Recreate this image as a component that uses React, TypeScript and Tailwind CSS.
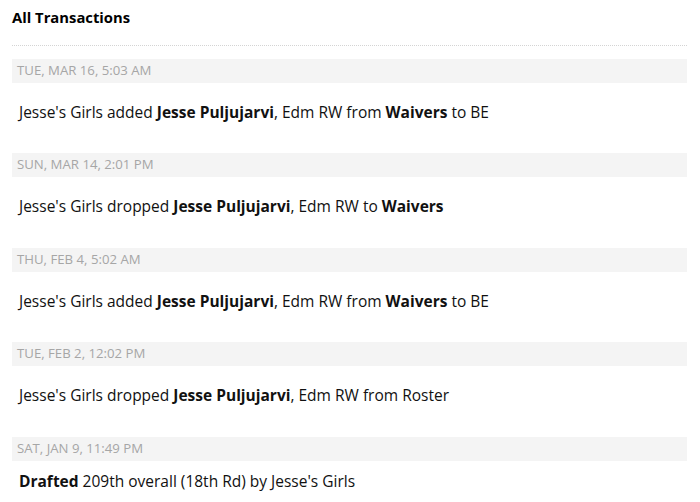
const rows = [
  {
    date: 'TUE, MAR 16, 5:03 AM',
    h: 'h-[70px]',
    body: (
      <>
        Jesse's Girls added <b>Jesse Puljujarvi</b>, Edm RW from <b>Waivers</b> to BE
      </>
    ),
  },
  {
    date: 'SUN, MAR 14, 2:01 PM',
    h: 'h-[71px]',
    body: (
      <>
        Jesse's Girls dropped <b>Jesse Puljujarvi</b>, Edm RW to <b>Waivers</b>
      </>
    ),
  },
  {
    date: 'THU, FEB 4, 5:02 AM',
    h: 'h-[70px]',
    body: (
      <>
        Jesse's Girls added <b>Jesse Puljujarvi</b>, Edm RW from <b>Waivers</b> to BE
      </>
    ),
  },
  {
    date: 'TUE, FEB 2, 12:02 PM',
    h: 'h-[71px]',
    body: (
      <>
        Jesse's Girls dropped <b>Jesse Puljujarvi</b>, Edm RW from Roster
      </>
    ),
  },
];

export default function App() {
  return (
    <div className="w-[700px] h-[502px] bg-white overflow-hidden pl-3 pr-[13px] font-['Open_Sans',sans-serif] text-[#111]">
      {/* Header */}
      <div className="h-[46px] pt-[7px] border-b border-dotted border-[#d4d4d4]">
        <h2 className="text-[14.8px] font-bold leading-[20px] text-black">All Transactions</h2>
      </div>

      <div className="pt-[13px]">
        {rows.map((r) => (
          <div key={r.date}>
            <div className="h-[24px] bg-[#f4f4f4] pl-[5px] flex items-center text-[13.2px] text-[#a6a6a6]">
              {r.date}
            </div>
            <div className={`${r.h} pl-[7px] pt-[18px] text-[15.5px] leading-[22px]`}>{r.body}</div>
          </div>
        ))}
        <div>
          <div className="h-[24px] bg-[#f4f4f4] pl-[5px] flex items-center text-[13.2px] text-[#a6a6a6]">
            SAT, JAN 9, 11:49 PM
          </div>
          <div className="pl-[7px] pt-[9px] text-[15.5px] leading-[22px]">
            <b>Drafted</b> 209th overall (18th Rd) by Jesse's Girls
          </div>
        </div>
      </div>
    </div>
  );
}
